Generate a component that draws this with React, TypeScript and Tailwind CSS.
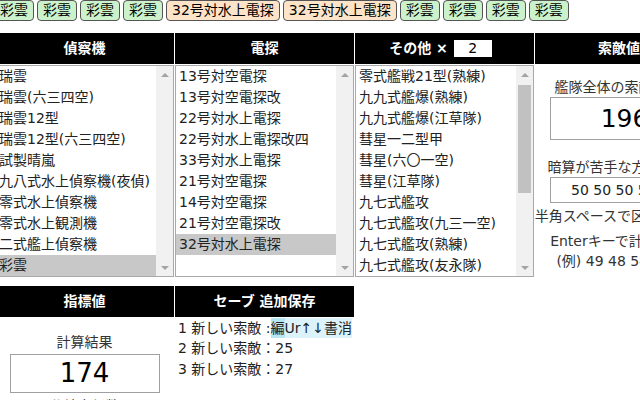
import React from "react";

const scout = [
  "瑞雲",
  "瑞雲(六三四空)",
  "瑞雲12型",
  "瑞雲12型(六三四空)",
  "試製晴嵐",
  "九八式水上偵察機(夜偵)",
  "零式水上偵察機",
  "零式水上観測機",
  "二式艦上偵察機",
  "彩雲",
];

const radar = [
  "13号対空電探",
  "13号対空電探改",
  "22号対水上電探",
  "22号対水上電探改四",
  "33号対水上電探",
  "21号対空電探",
  "14号対空電探",
  "21号対空電探改",
  "32号対水上電探",
];

const others = [
  "零式艦戦21型(熟練)",
  "九九式艦爆(熟練)",
  "九九式艦爆(江草隊)",
  "彗星一二型甲",
  "彗星(六〇一空)",
  "彗星(江草隊)",
  "九七式艦攻",
  "九七式艦攻(九三一空)",
  "九七式艦攻(熟練)",
  "九七式艦攻(友永隊)",
];

const picked = ["彩雲", "彩雲", "彩雲", "彩雲", "32号対水上電探", "32号対水上電探", "彩雲", "彩雲", "彩雲", "彩雲"];

function Scrollbar({ thumb }: { thumb?: boolean }) {
  return (
    <div className="w-[17px] shrink-0 bg-[#f1f1f1] flex flex-col">
      <div className="h-[17px] flex items-center justify-center">
        <div className="w-0 h-0 border-x-[4px] border-x-transparent border-b-[4px] border-b-[#a3a3a3]" />
      </div>
      <div className="flex-1 px-[2px]">
        {thumb && <div className="mt-[2px] h-[108px] bg-[#c1c1c1]" />}
      </div>
      <div className="h-[17px] flex items-center justify-center">
        <div className="w-0 h-0 border-x-[4px] border-x-transparent border-t-[4px] border-t-[#a3a3a3]" />
      </div>
    </div>
  );
}

function ListBox({ items, selected, thumb }: { items: string[]; selected?: number; thumb?: boolean }) {
  return (
    <div className="h-[212px] border border-[#a9a9a9] flex bg-white overflow-hidden">
      <div className="flex-1 flex flex-col">
        {items.map((item, i) => (
          <div
            key={i}
            className={`h-[21px] shrink-0 leading-[21px] pl-[3px] whitespace-nowrap text-[#222] ${i === selected ? "bg-[#c8c8c8]" : ""}`}
          >
            {item}
          </div>
        ))}
      </div>
      <Scrollbar thumb={thumb} />
    </div>
  );
}

export default function App() {
  return (
    <div className="w-[640px] h-[400px] overflow-hidden bg-white text-[14px] text-black font-['DejaVu_Sans','Noto_Sans_CJK_JP',sans-serif]">
      {/* picked equipment */}
      <div className="flex gap-[3px] -ml-[6px] h-[21px]">
        {picked.map((name, i) => (
          <div
            key={i}
            className={`shrink-0 h-[21px] px-[5px] leading-[19px] border border-[#555] rounded-[4px] whitespace-nowrap ${name === "彩雲" ? "bg-[#ccf2cc]" : "bg-[#fde4c8]"}`}
          >
            {name}
          </div>
        ))}
      </div>

      <div className="mt-[12px] -ml-[5px] w-[730px]">
        {/* headers */}
        <div className="flex gap-px bg-white h-[31px]">
          <div className="w-[179px] bg-black text-white font-bold flex items-center justify-center">偵察機</div>
          <div className="w-[179px] bg-black text-white font-bold flex items-center justify-center">電探</div>
          <div className="w-[179px] bg-black text-white font-bold flex items-center justify-center gap-[6px]">
            <span className="-ml-[8px]">その他 ×</span>
            <div className="w-[38px] h-[17px] bg-white text-black font-normal text-center leading-[17px]">2</div>
          </div>
          <div className="flex-1 bg-black text-white font-bold flex items-center pl-[63px]">索敵値</div>
        </div>

        <div className="flex gap-px mt-px">
          <div className="w-[179px]">
            <ListBox items={scout} selected={9} />
          </div>
          <div className="w-[179px]">
            <ListBox items={radar} selected={8} />
          </div>
          <div className="w-[179px]">
            <ListBox items={others} thumb />
          </div>
          <div className="w-[179px] flex flex-col items-center text-[#333] whitespace-nowrap">
            <div className="mt-[13px] leading-[18px]">艦隊全体の索敵スコア</div>
            <div className="mt-px w-[150px] h-[43px] border border-[#a0a0a0] flex items-center justify-center text-[25px] text-black">
              196
            </div>
            <div className="mt-[18px] leading-[18px]">暗算が苦手な方はこちら</div>
            <div className="mt-px w-[150px] h-[26px] border border-[#a0a0a0] flex items-center justify-center text-[#222]">
              50 50 50 50 50
            </div>
            <div className="mt-[4px] leading-[18px]">半角スペースで区切って入力</div>
            <div className="mt-[7px] leading-[18px]">Enterキーで計算します</div>
            <div className="mt-[2px] leading-[18px]">(例) 49 48 54 50 52</div>
          </div>
        </div>

        {/* bottom */}
        <div className="mt-[9px] flex gap-px h-[31px]">
          <div className="w-[179px] bg-black text-white font-bold flex items-center justify-center">指標値</div>
          <div className="w-[179px] bg-black text-white font-bold flex items-center justify-center">セーブ 追加保存</div>
        </div>

        <div className="flex gap-px">
          <div className="w-[179px] flex flex-col items-center text-[#333]">
            <div className="mt-[15px] leading-[20px]">計算結果</div>
            <div className="mt-[2px] w-[150px] h-[39px] border border-[#a0a0a0] flex items-center justify-center text-[26px] text-black">
              174
            </div>
            <div className="mt-[3px] leading-[20px]">分岐点係数</div>
          </div>
          <div className="w-[179px] flex flex-col pl-[3px] pt-[1px] text-[#222] whitespace-nowrap">
            <div className="h-[20px] leading-[20px] flex">
              <span>1 新しい索敵 :</span>
              <span className="bg-[#dcf3fb] flex">
                <span className="bg-[#b9e6f3]">編</span>
                <span>Ur↑↓書消</span>
              </span>
            </div>
            <div className="h-[21px] leading-[21px]">2 新しい索敵：25</div>
            <div className="h-[21px] leading-[21px]">3 新しい索敵：27</div>
          </div>
        </div>
      </div>
    </div>
  );
}
